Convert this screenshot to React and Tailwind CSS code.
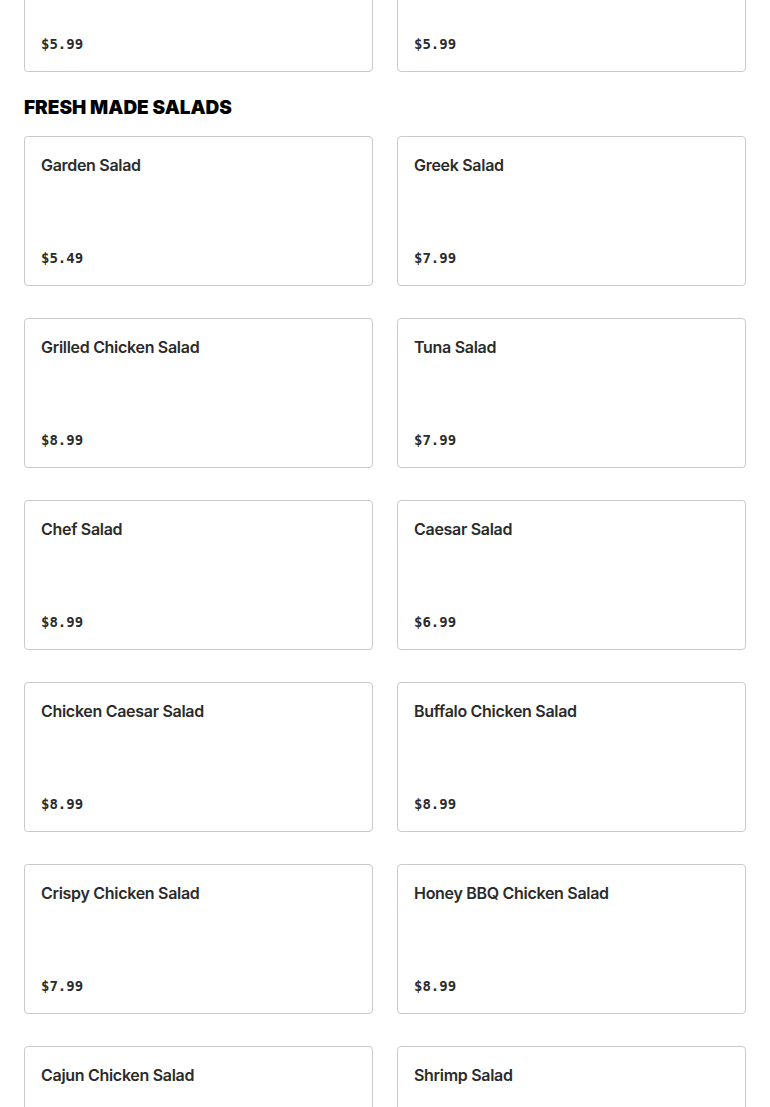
const topRow = [{ name: '', price: '$5.99' }, { name: '', price: '$5.99' }];

const salads = [
  { name: 'Garden Salad', price: '$5.49' },
  { name: 'Greek Salad', price: '$7.99' },
  { name: 'Grilled Chicken Salad', price: '$8.99' },
  { name: 'Tuna Salad', price: '$7.99' },
  { name: 'Chef Salad', price: '$8.99' },
  { name: 'Caesar Salad', price: '$6.99' },
  { name: 'Chicken Caesar Salad', price: '$8.99' },
  { name: 'Buffalo Chicken Salad', price: '$8.99' },
  { name: 'Crispy Chicken Salad', price: '$7.99' },
  { name: 'Honey BBQ Chicken Salad', price: '$8.99' },
  { name: 'Cajun Chicken Salad', price: '$8.99' },
  { name: 'Shrimp Salad', price: '$9.99' },
];

function MenuCard({ item }) {
  return (
    <div className="h-[150px] flex flex-col justify-between border border-[#cacaca] rounded-[4px] bg-white px-4 pt-[18px] pb-[17px]">
      <h3 className="font-['Inter',sans-serif] font-semibold text-[16px] leading-5 tracking-[-0.3px] text-[#2b2b2b]">
        {item.name}
      </h3>
      <p className="font-['DejaVu_Sans_Mono',monospace] font-bold text-[14px] leading-5 text-[#2b2b2b]">
        {item.price}
      </p>
    </div>
  );
}

export default function App() {
  return (
    <div className="bg-white min-h-screen px-6 overflow-hidden">
      <div className="grid grid-cols-2 gap-x-6 -mt-[78px]">
        {topRow.map((item, i) => (
          <MenuCard key={i} item={item} />
        ))}
      </div>

      <h2 className="mt-6 mb-4 font-['Inter',sans-serif] font-black text-[19px] leading-6 uppercase text-black">
        Fresh Made Salads
      </h2>

      <div className="grid grid-cols-2 gap-x-6 gap-y-8">
        {salads.map((item) => (
          <MenuCard key={item.name} item={item} />
        ))}
      </div>
    </div>
  );
}
